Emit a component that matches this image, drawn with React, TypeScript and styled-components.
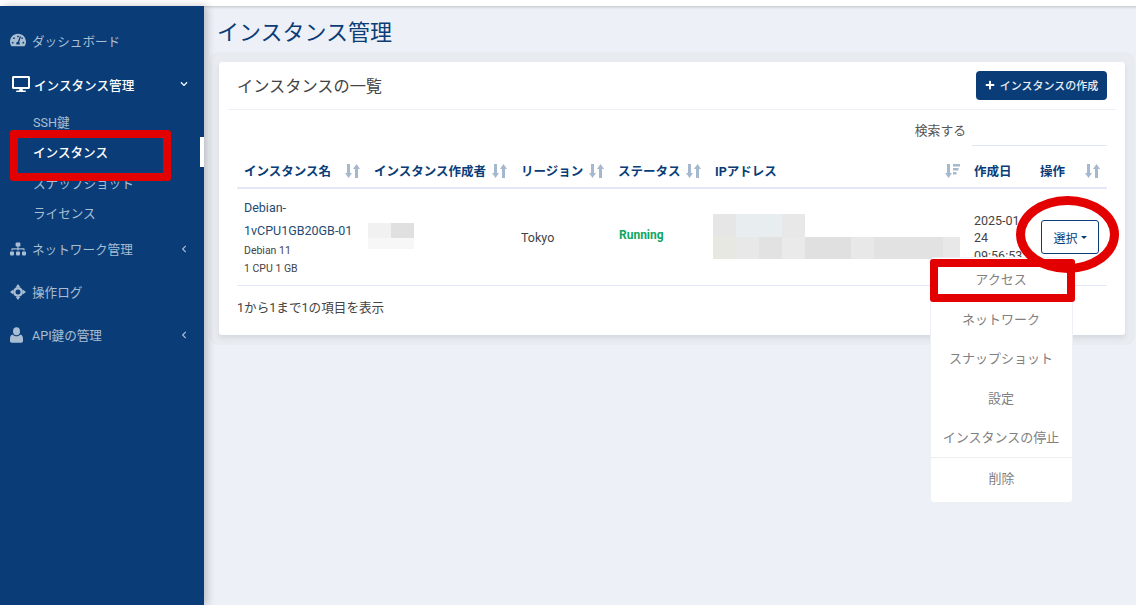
import React from 'react'
import styled, { createGlobalStyle } from 'styled-components'
import { FaTachometerAlt, FaDesktop, FaSitemap, FaPlus, FaChevronDown, FaChevronLeft } from 'react-icons/fa'

const navy = '#0a3d77'
const sansStack = 'Roboto, "Noto Sans CJK JP", sans-serif'

const GlobalStyle = createGlobalStyle`
  html, body {
    margin: 0;
    padding: 0;
    height: 100%;
    background: #fff;
    font-family: ${sansStack};
    overflow: hidden;
  }
  #root { height: 100%; }
`

const Page = styled.div`
  display: flex;
  flex-direction: column;
  width: 1136px;
  height: 605px;
  position: relative;
  overflow: hidden;
`

const TopStrip = styled.div`
  height: 6px;
  flex: none;
  background: #fff;
`

const Body = styled.div`
  flex: 1;
  display: flex;
  min-height: 0;
`

const Sidebar = styled.nav`
  width: 204px;
  flex: none;
  background: ${navy};
  box-shadow: 3px 0 8px rgba(0, 0, 0, 0.22);
  padding-top: 12px;
  box-sizing: border-box;
  position: relative;
  z-index: 1;
`

const NavRow = styled.div<{ $active?: boolean; $height: number; $pull?: number }>`
  display: flex;
  align-items: center;
  height: ${(p) => p.$height}px;
  margin-top: ${(p) => p.$pull ?? 0}px;
  padding: 0 16px 0 10px;
  color: ${(p) => (p.$active ? '#fff' : '#a9bdd3')};
  font-size: 12.6px;
  font-weight: ${(p) => (p.$active ? 500 : 400)};
`

const NavIcon = styled.span<{ $wide?: boolean }>`
  display: inline-flex;
  justify-content: flex-start;
  width: 22px;
  flex: none;
  font-size: ${(p) => (p.$wide ? 18 : 16)}px;
  ${(p) => (p.$wide ? 'margin-left: 2px;' : '')}
`

const NavLabel = styled.span`
  flex: 1;
  white-space: nowrap;
`

const NavCaret = styled.span`
  display: inline-flex;
  font-size: 8px;
`

const SubRow = styled.div<{ $active?: boolean }>`
  height: 30.5px;
  display: flex;
  align-items: center;
  padding-left: 33px;
  font-size: 12.6px;
  font-weight: ${(p) => (p.$active ? 500 : 400)};
  color: ${(p) => (p.$active ? '#fff' : '#a9bdd3')};
  position: relative;
  white-space: nowrap;
`

const ActiveTick = styled.span`
  position: absolute;
  right: 0;
  top: 0;
  width: 4px;
  height: 100%;
  background: #fff;
`

const Main = styled.main`
  flex: 1;
  background: #eef0f8;
  padding: 0 11px 0 15px;
  min-width: 0;
  box-shadow: inset 0 3px 3px -2px rgba(0, 0, 0, 0.2);
`

const Title = styled.h1`
  margin: 0 0 0 -2px;
  height: 56px;
  padding-top: 13px;
  box-sizing: border-box;
  font-size: 22px;
  line-height: 28px;
  font-weight: 400;
  color: ${navy};
`

const Card = styled.section`
  background: #fff;
  border-radius: 3px;
  height: 273px;
  padding: 0 18px;
  box-sizing: border-box;
  box-shadow: 0 3px 4px rgba(150, 160, 170, 0.22), 0 0 0 10px #e8ebf0;
`

const CardHeader = styled.header`
  height: 47px;
  display: flex;
  align-items: center;
  justify-content: space-between;
  border-bottom: 1px solid #eef0f7;
  margin: 0 -9px;
  padding: 0 9px;
`

const CardTitle = styled.h2`
  margin: -1px 0 0 0;
  font-size: 16.2px;
  font-weight: 400;
  color: #444;
`

const CreateButton = styled.button`
  height: 29px;
  width: 131px;
  padding: 0;
  border: none;
  border-radius: 4px;
  background: ${navy};
  color: #e8eef5;
  font-family: inherit;
  font-size: 11px;
  font-weight: 500;
  display: flex;
  align-items: center;
  justify-content: center;
  gap: 5px;
  margin-top: -1px;
  svg { font-size: 10px; color: #fff; }
`

const SearchRow = styled.div`
  display: flex;
  justify-content: flex-end;
  height: 36px;
  gap: 6px;
  font-size: 12.8px;
  line-height: 42px;
  color: #555;
`

const SearchInput = styled.div`
  width: 135px;
  height: 100%;
  box-sizing: border-box;
  border-bottom: 1px solid #e0e6f5;
`

const Table = styled.table`
  width: 870px;
  table-layout: fixed;
  border-collapse: separate;
  border-spacing: 0;
  margin-top: 6px;
`

const HeadCell = styled.th<{ $width: number }>`
  width: ${(p) => p.$width}px;
  height: 37px;
  padding: 2px 7px 0;
  box-sizing: border-box;
  border-bottom: 2px solid #e3e8f8;
  text-align: left;
  font-size: 12.5px;
  font-weight: 700;
  color: ${navy};
  white-space: nowrap;
`

const HeadInner = styled.div`
  display: flex;
  align-items: center;
  justify-content: space-between;
`

const SortGlyph = styled.svg`
  flex: none;
  width: 15px;
  height: 14px;
  fill: #a6b8cd;
`

const Cell = styled.td`
  height: 97px;
  padding: 0 7px;
  box-sizing: border-box;
  border-bottom: 1px solid #e3e8f8;
  vertical-align: middle;
  font-size: 12.5px;
  color: #444;
  overflow: hidden;
`

const InstanceName = styled.div`
  font-size: 12.5px;
  line-height: 23px;
  color: #234a74;
`

const InstanceSpec = styled.div`
  font-size: 10.5px;
  line-height: 18px;
  color: #444;
`

const Running = styled.span`
  color: #10a661;
  font-weight: 700;
  font-size: 12px;
  position: relative;
  top: -3px;
  left: 1px;
`

const CreatorMosaic = styled.div`
  display: grid;
  grid-template-columns: 23px 23px;
  grid-template-rows: 15px 11px;
  margin: -3px 0 0 -6px;
`

const IpMosaic = styled.div`
  display: grid;
  grid-template-columns: repeat(11, 23px);
  grid-template-rows: 23px 22px;
  width: 247px;
  overflow: hidden;
  margin: -2px 0 0 -2px;
`

const MosaicBlock = styled.span<{ $tone: string }>`
  background: ${(p) => p.$tone};
`

const DateText = styled.div`
  line-height: 17.5px;
  font-size: 12.5px;
  color: #444;
  margin-top: 2px;
`

const SelectButton = styled.button`
  width: 58px;
  height: 34px;
  padding: 0;
  background: #fff;
  border: 1px solid ${navy};
  border-radius: 3px;
  color: ${navy};
  font-family: inherit;
  font-size: 12px;
  display: flex;
  align-items: center;
  justify-content: center;
  gap: 3px;
  margin: 0 0 0 1px;
`

const TinyCaret = styled.span`
  width: 0;
  height: 0;
  border-left: 3px solid transparent;
  border-right: 3px solid transparent;
  border-top: 3px solid ${navy};
`

const FooterNote = styled.div`
  margin-top: 11px;
  font-size: 12.6px;
  color: #444;
`

const Dropdown = styled.div`
  position: absolute;
  left: 930px;
  top: 257px;
  width: 143px;
  height: 246px;
  box-sizing: border-box;
  background: #fff;
  border: 1px solid #eef0f5;
  border-radius: 4px;
  padding: 1px 1px 0 0;
  z-index: 2;
`

const DropdownItem = styled.div<{ $ruled?: boolean }>`
  height: 39.5px;
  display: flex;
  align-items: center;
  justify-content: center;
  font-size: 13px;
  color: #808080;
  white-space: nowrap;
  ${(p) => (p.$ruled ? 'border-top: 1px solid #eceef1; margin-right: -1px;' : '')}
`

const RedFrame = styled.div<{ $x: number; $y: number; $w: number; $h: number }>`
  position: absolute;
  left: ${(p) => p.$x}px;
  top: ${(p) => p.$y}px;
  width: ${(p) => p.$w}px;
  height: ${(p) => p.$h}px;
  box-sizing: border-box;
  border: 8px solid #e30000;
  border-radius: 3px;
  z-index: 3;
`

const RedRing = styled.div`
  position: absolute;
  left: 1016px;
  top: 196px;
  width: 103px;
  height: 77px;
  box-sizing: border-box;
  border: 9px solid #e30000;
  border-radius: 50%;
  z-index: 3;
`

const SortIcon = () => (
  <SortGlyph viewBox="0 0 15 14">
    <path d="M2 0h3v9h2l-3.5 5L0 9h2z" />
    <path d="M10 14h3V5h2l-3.5-5L8 5h2z" />
  </SortGlyph>
)

const SortedIcon = () => (
  <SortGlyph viewBox="0 0 15 14">
    <path d="M2 0h3v9h2l-3.5 5L0 9h2z" />
    <path d="M8 0h7v2.5H8zM8 4h5.5v2.5H8zM8 8h3.5v2.5H8z" />
  </SortGlyph>
)

const LogIcon = () => (
  <svg width="16" height="16" viewBox="0 0 16 16" fill="currentColor">
    <path d="M8 3a5 5 0 1 0 0 10A5 5 0 0 0 8 3zm0 2.5a2.5 2.5 0 1 1 0 5 2.5 2.5 0 0 1 0-5z" />
    <path d="M8 0l2.2 3H5.8zM8 16l-2.2-3h4.4zM0 8l3-2.2v4.4zM16 8l-3 2.2V5.800z" />
  </svg>
)

const UserIcon = () => (
  <svg width="13" height="16" viewBox="0 0 13 16" fill="currentColor">
    <ellipse cx="6.500" cy="4.200" rx="3.500" ry="4" />
    <path d="M2.500 7.500c1 1.200 2.500 1.800 4 1.800s3-.6 4-1.800c1.600.4 2.500 2 2.500 4.500v2c0 1-.8 1.700-1.800 1.700H1.800C.8 15.700 0 15 0 14v-2c0-2.500.9-4.100 2.500-4.500z" />
  </svg>
)

const creatorBlocks = ['#f1f1f1', '#e0e0e0', '#f7f7f7', '#f7f7f7']
const ipBlocks = [
  '#e6e6e6', '#e8edf0', '#e8edf0', '#e8e8e8', '#fff', '#fff', '#fff', '#fff', '#fff', '#fff', '#fff',
  '#e8e8e2', '#e8e8e8', '#e2e2e2', '#eaeaea', '#e0e0e0', '#e0e0e0', '#e8e8e8', '#e2e2e2', '#e2e2e2', '#e2e2e2', '#e8e8e8',
]

const columns = [
  { label: 'インスタンス名', width: 130 },
  { label: 'インスタンス作成者', width: 147 },
  { label: 'リージョン', width: 97 },
  { label: 'ステータス', width: 97 },
  { label: 'IPアドレス', width: 259, sorted: true },
  { label: '作成日', width: 66, plain: true },
  { label: '操作', width: 74 },
]

const menu = ['アクセス', 'ネットワーク', 'スナップショット', '設定', 'インスタンスの停止']

export default function App() {
  return (
    <Page>
      <GlobalStyle />
      <TopStrip />
      <Body>
        <Sidebar>
          <NavRow $height={44}>
            <NavIcon><FaTachometerAlt /></NavIcon>
            <NavLabel>ダッシュボード</NavLabel>
          </NavRow>
          <NavRow $height={44} $active>
            <NavIcon $wide><FaDesktop /></NavIcon>
            <NavLabel>インスタンス管理</NavLabel>
            <NavCaret><FaChevronDown /></NavCaret>
          </NavRow>
          <SubRow>SSH鍵</SubRow>
          <SubRow $active>
            インスタンス
            <ActiveTick />
          </SubRow>
          <SubRow>スナップショット</SubRow>
          <SubRow>ライセンス</SubRow>
          <NavRow $height={43} $pull={-1}>
            <NavIcon><FaSitemap /></NavIcon>
            <NavLabel>ネットワーク管理</NavLabel>
            <NavCaret><FaChevronLeft /></NavCaret>
          </NavRow>
          <NavRow $height={43}>
            <NavIcon><LogIcon /></NavIcon>
            <NavLabel>操作ログ</NavLabel>
          </NavRow>
          <NavRow $height={43}>
            <NavIcon><UserIcon /></NavIcon>
            <NavLabel>API鍵の管理</NavLabel>
            <NavCaret><FaChevronLeft /></NavCaret>
          </NavRow>
        </Sidebar>
        <Main>
          <Title>インスタンス管理</Title>
          <Card>
            <CardHeader>
              <CardTitle>インスタンスの一覧</CardTitle>
              <CreateButton>
                <FaPlus />
                インスタンスの作成
              </CreateButton>
            </CardHeader>
            <SearchRow>
              検索する
              <SearchInput />
            </SearchRow>
            <Table>
              <thead>
                <tr>
                  {columns.map((c) => (
                    <HeadCell key={c.label} $width={c.width}>
                      <HeadInner>
                        {c.label}
                        {c.sorted ? <SortedIcon /> : c.plain ? null : <SortIcon />}
                      </HeadInner>
                    </HeadCell>
                  ))}
                </tr>
              </thead>
              <tbody>
                <tr>
                  <Cell>
                    <InstanceName>Debian-<br />1vCPU1GB20GB-01</InstanceName>
                    <InstanceSpec>Debian 11<br />1 CPU 1 GB</InstanceSpec>
                  </Cell>
                  <Cell>
                    <CreatorMosaic>
                      {creatorBlocks.map((c, i) => (
                        <MosaicBlock key={i} $tone={c} />
                      ))}
                    </CreatorMosaic>
                  </Cell>
                  <Cell>Tokyo</Cell>
                  <Cell><Running>Running</Running></Cell>
                  <Cell>
                    <IpMosaic>
                      {ipBlocks.map((c, i) => (
                        <MosaicBlock key={i} $tone={c} />
                      ))}
                    </IpMosaic>
                  </Cell>
                  <Cell>
                    <DateText>2025-01-24 09:56:53</DateText>
                  </Cell>
                  <Cell>
                    <SelectButton>
                      選択
                      <TinyCaret />
                    </SelectButton>
                  </Cell>
                </tr>
              </tbody>
            </Table>
            <FooterNote>1から1まで1の項目を表示</FooterNote>
          </Card>
        </Main>
      </Body>
      <Dropdown>
        {menu.map((m) => (
          <DropdownItem key={m}>{m}</DropdownItem>
        ))}
        <DropdownItem $ruled>削除</DropdownItem>
      </Dropdown>
      <RedFrame $x={10} $y={130} $w={161} $h={51} />
      <RedFrame $x={930} $y={259} $w={145} $h={43} />
      <RedRing />
    </Page>
  )
}
